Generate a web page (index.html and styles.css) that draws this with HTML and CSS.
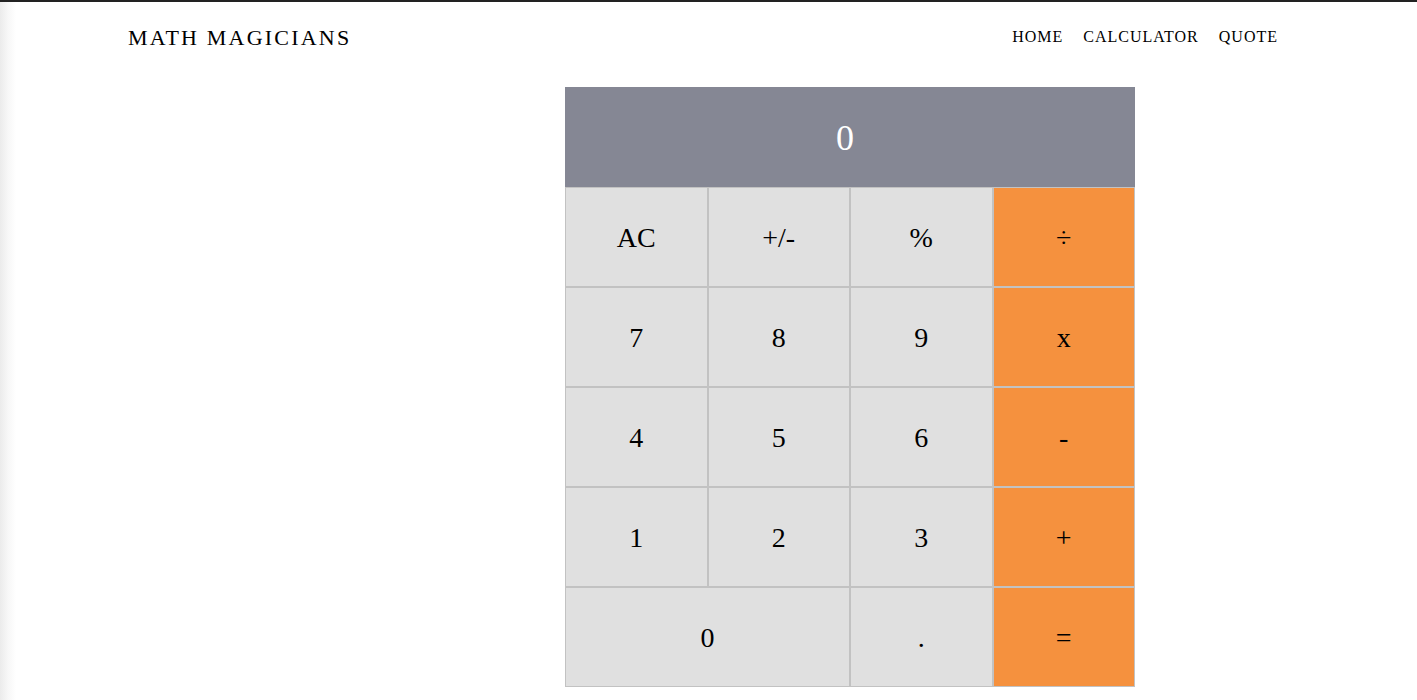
FILE: index.html
```html
<!DOCTYPE html>
<html lang="en">
<head>
<meta charset="utf-8">
<title>Math Magicians</title>
<link rel="stylesheet" href="styles.css">
</head>
<body>
<header class="header">
  <h1 class="logo">MATH MAGICIANS</h1>
  <nav class="nav">
    <a class="nav-link" href="#">HOME</a>
    <a class="nav-link" href="#">CALCULATOR</a>
    <a class="nav-link" href="#">QUOTE</a>
  </nav>
</header>
<main class="main">
  <div class="calculator">
    <div class="display">0</div>
    <button class="btn">AC</button>
    <button class="btn">+/-</button>
    <button class="btn">%</button>
    <button class="btn op">÷</button>
    <button class="btn">7</button>
    <button class="btn">8</button>
    <button class="btn">9</button>
    <button class="btn op">x</button>
    <button class="btn">4</button>
    <button class="btn">5</button>
    <button class="btn">6</button>
    <button class="btn op">-</button>
    <button class="btn">1</button>
    <button class="btn">2</button>
    <button class="btn">3</button>
    <button class="btn op">+</button>
    <button class="btn zero">0</button>
    <button class="btn">.</button>
    <button class="btn op">=</button>
  </div>
</main>
</body>
</html>
```
FILE: styles.css
```css
* { box-sizing: border-box; }
html, body { margin: 0; padding: 0; }
body {
  font-family: "Liberation Serif", "Times New Roman", serif;
  color: #000;
  border-top: 2px solid #222;
  background: linear-gradient(to right, #ebebeb 0, #f7f7f7 8px, #fff 16px);
  min-height: 700px;
}
.header {
  display: flex;
  justify-content: space-between;
  align-items: center;
  height: 72px;
  padding: 0 139px 0 128px;
}
.logo {
  margin: 0;
  font-size: 22px;
  font-weight: normal;
  letter-spacing: 2.2px;
}
.nav {
  display: flex;
  gap: 20px;
  margin-top: -2px;
}
.nav-link {
  color: #000;
  text-decoration: none;
  font-size: 16px;
  letter-spacing: 1px;
}
.main {
  padding-top: 13px;
  padding-left: 565px;
}
.calculator {
  width: 570px;
  display: grid;
  grid-template-columns: repeat(4, 1fr);
  grid-auto-rows: 100px;
}
.display {
  grid-column: 1 / -1;
  background: #858794;
  color: #fff;
  font-size: 36px;
  display: flex;
  align-items: center;
  justify-content: center;
  padding: 2px 10px 0 0;
}
.btn {
  font-family: "Liberation Serif", "Times New Roman", serif;
  font-size: 28px;
  color: #000;
  background: #e0e0e0;
  border: 1px solid #c2c2c2;
  margin: 0;
  padding: 2px 0 0 0;
  cursor: pointer;
}
.btn.op { background: #f5913e; }
.btn.zero { grid-column: span 2; }
```
